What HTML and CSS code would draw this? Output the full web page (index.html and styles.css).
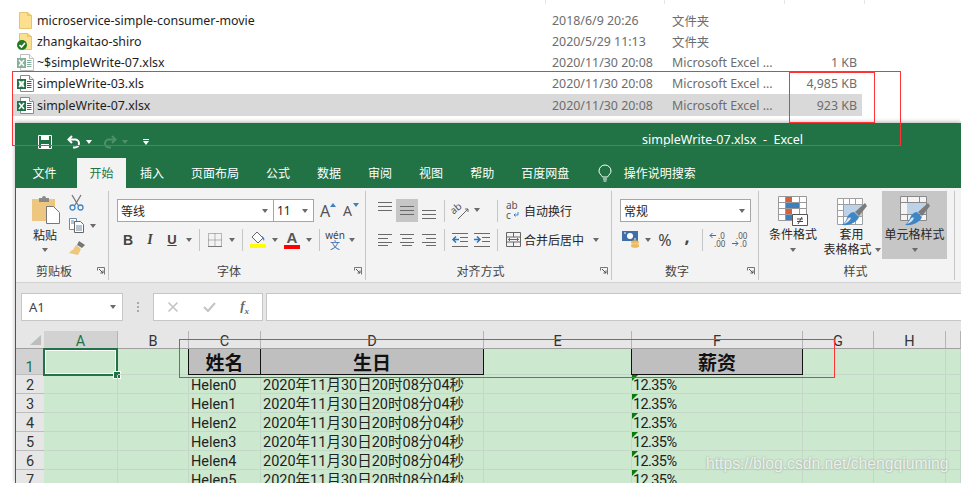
FILE: index.html
```html
<!DOCTYPE html>
<html lang="zh-CN">
    <head>
        <meta charset="UTF-8" />
        <title>simpleWrite-07.xlsx - Excel</title>
        <link rel="stylesheet" href="styles.css">
    </head>
    <body>
        <svg class="defs" width="0" height="0">
            <symbol id="folder" viewBox="0 0 13 17">
                <path d="M.5 .5h8l4 3v13H.5z" fill="#fde08f" stroke="#e6c36e"/>
                <path d="M8.5 .5v3h4" fill="#fbd26a" stroke="#e6c36e"/>
            </symbol>
            <symbol id="xl-doc" viewBox="0 0 17 17">
                <path d="M3.5 .5h9l4 4v12h-13z" fill="#fff" stroke="#8a8a8a"/>
                <path d="M12.5 .5v4h4" fill="#eee" stroke="#8a8a8a"/>
                <path d="M10 6.500h4.500M10 8.500h4.500M10 10.500h4.500M10 12.500h4.500" stroke="#217346"/>
                <rect x="0" y="4" width="9" height="10" fill="#217346"/>
                <path d="M2 6l5 6M7 6l-5 6" stroke="#fff" stroke-width="1.500"/>
            </symbol>
            <symbol id="launcher" viewBox="0 0 8 8">
                <path d="M.5 .5h7v7M.5 .5v3M.5 .5" fill="none" stroke="#777"/>
                <path d="M2 2l4 4M6 3.500V6H3.500" fill="none" stroke="#555"/>
            </symbol>
            <symbol id="lines-full" viewBox="0 0 14 10">
                <path d="M0 .5h14M0 4.500h14M0 8.500h14" stroke="#6a6a6a"/>
            </symbol>
            <symbol id="lines-left" viewBox="0 0 14 12">
                <path d="M0 .5h14M0 4.500h10M0 8.500h14M0 11.500h10" stroke="#6a6a6a"/>
            </symbol>
            <symbol id="lines-mid" viewBox="0 0 14 12">
                <path d="M0 .5h14M2 4.500h10M0 8.500h14M2 11.500h10" stroke="#6a6a6a"/>
            </symbol>
            <symbol id="lines-right" viewBox="0 0 14 12">
                <path d="M0 .5h14M4 4.500h10M0 8.500h14M4 11.500h10" stroke="#6a6a6a"/>
            </symbol>
            <symbol id="brush" viewBox="0 0 30 30">
                <path d="M28 7l2 3-8 10-4-4z" fill="#7b7b7b"/>
                <path d="M17 16l5 5c-2 5-9 9-17 8 3-2 4-5 5-7 1-3 4-6 7-6z" fill="#3f86c6"/>
                <path d="M7 28c3-1 6-3 7-6-2-1-3 0-4 2-1 1-2 3-3 4z" fill="#fff" opacity=".8"/>
            </symbol>
        </svg>

        <section class="file-list">
            <div class="file-head">
                <span></span><span></span><span></span><span></span>
            </div>
            <div class="file-row">
                <span class="file-name"><svg class="file-icon"><use href="#folder" x="2" y="0" width="13" height="17"/></svg>microservice-simple-consumer-movie</span>
                <span>2018/6/9 20:26</span>
                <span class="file-type">文件夹</span>
                <span></span>
            </div>
            <div class="file-row">
                <span class="file-name"><svg class="file-icon"><use href="#folder" x="2" y="0" width="13" height="17"/><circle cx="5" cy="12" r="5" fill="#217a21"/><path d="M2.500 12l2 2 3.500-4" fill="none" stroke="#fff" stroke-width="1.600"/></svg>zhangkaitao-shiro</span>
                <span>2020/5/29 11:13</span>
                <span class="file-type">文件夹</span>
                <span></span>
            </div>
            <div class="file-row">
                <span class="file-name"><svg class="file-icon faded"><use href="#xl-doc" width="17" height="17"/></svg>~$simpleWrite-07.xlsx</span>
                <span>2020/11/30 20:08</span>
                <span class="file-type">Microsoft Excel ...</span>
                <span class="file-size">1 KB</span>
            </div>
            <div class="file-row">
                <span class="file-name"><svg class="file-icon"><use href="#xl-doc" width="17" height="17"/><rect x="2" y="6" width="5" height="6" fill="#fff" opacity=".6"/></svg>simpleWrite-03.xls</span>
                <span>2020/11/30 20:08</span>
                <span class="file-type">Microsoft Excel ...</span>
                <span class="file-size">4,985 KB</span>
            </div>
            <div class="file-row selected">
                <span class="file-name"><svg class="file-icon"><use href="#xl-doc" width="17" height="17"/></svg>simpleWrite-07.xlsx</span>
                <span>2020/11/30 20:08</span>
                <span class="file-type">Microsoft Excel ...</span>
                <span class="file-size">923 KB</span>
            </div>
        </section>

        <main class="excel">
            <header class="titlebar">
                <div class="qat">
                    <svg class="qat-save" width="14" height="14" viewBox="0 0 14 14"><path d="M.5 .5h13v13H.5z" fill="none" stroke="#fff"/><path d="M3 1h8v4H3zM3 9h8v4H3z" fill="#fff"/><path d="M0 6h1v2H0z" fill="#fff"/></svg>
                    <svg class="qat-undo" width="14" height="14" viewBox="0 0 14 14"><path d="M5 1L1.500 4.500 5 8" fill="none" stroke="#fff" stroke-width="2"/><path d="M2 4.500h6a4 4 0 0 1 0 8H6" fill="none" stroke="#fff" stroke-width="2"/></svg>
                    <i class="caret white"></i>
                    <svg class="qat-redo" width="14" height="14" viewBox="0 0 14 14"><path d="M9 1l3.500 3.500L9 8" fill="none" stroke="#4f9069" stroke-width="2"/><path d="M12 4.500H6a4 4 0 0 0 0 8h2" fill="none" stroke="#4f9069" stroke-width="2"/></svg>
                    <i class="caret dim"></i>
                    <span class="qat-more"><i class="caret white"></i></span>
                </div>
                <div class="doc-title">simpleWrite-07.xlsx&nbsp; - &nbsp;Excel</div>
            </header>
            <nav class="tabs">
                <a class="tab first">文件</a>
                <a class="tab active">开始</a>
                <a class="tab">插入</a>
                <a class="tab">页面布局</a>
                <a class="tab">公式</a>
                <a class="tab">数据</a>
                <a class="tab">审阅</a>
                <a class="tab">视图</a>
                <a class="tab">帮助</a>
                <a class="tab">百度网盘</a>
                <a class="tab search">
                    <svg width="14" height="17" viewBox="0 0 14 17"><path d="M4.500 12C3 9.500 1 8.500 1 6a6 6 0 0 1 12 0c0 2.500-2 3.500-3.500 6z" fill="none" stroke="#fff"/><path d="M5 14h4M5.500 16h3" stroke="#fff"/></svg>
                    操作说明搜索
                </a>
            </nav>

            <section class="ribbon">
                <div class="group g-clip">
                    <div class="group-body clip-body">
                        <div class="big-btn paste">
                            <svg width="29" height="29" viewBox="0 0 29 29"><path d="M1 4h23v22H1z" fill="#edc67f"/><path d="M8 3h3a2 2 0 0 1 4 0h3v4H8z" fill="#8a8a8a"/><path d="M15.500 11.500h7l6 6v11h-13z" fill="#fff" stroke="#777"/></svg>
                            <span>粘贴</span>
                            <i class="caret"></i>
                        </div>
                        <div class="clip-tools">
                            <div class="clip-tool">
                                <svg width="15" height="16" viewBox="0 0 15 16"><path d="M3 0l6 10M12 0L6 10" stroke="#777" stroke-width="1.300"/><circle cx="3.500" cy="12.500" r="2.500" fill="none" stroke="#3f86c6" stroke-width="1.300"/><circle cx="11.500" cy="12.500" r="2.500" fill="none" stroke="#3f86c6" stroke-width="1.300"/></svg>
                            </div>
                            <div class="clip-tool">
                                <svg width="16" height="15" viewBox="0 0 16 15"><path d="M.5 .5h7v11h-7z" fill="#fff" stroke="#6f8aa5"/><path d="M5.500 3.500h6l3 3v8h-9z" fill="#fff" stroke="#666"/><path d="M2 3h3M2 5h3M7 8h6M7 10h6M7 12h6" stroke="#6f8aa5"/></svg>
                                <i class="caret"></i>
                            </div>
                            <div class="clip-tool">
                                <svg width="17" height="15" viewBox="0 0 17 15"><path d="M10 0l6 4-3 3-5-3z" fill="#777"/><path d="M7 4l5 4-3 6-9-2 3-3 1 0z" fill="#edc67f"/></svg>
                            </div>
                        </div>
                    </div>
                    <div class="group-label"><span>剪贴板</span><svg class="launch"><use href="#launcher" width="8" height="8"/></svg></div>
                </div>

                <div class="group g-font">
                    <div class="group-body rows">
                        <div class="tool-row">
                            <div class="combo font-combo"><span>等线</span><i class="caret"></i></div>
                            <div class="combo size-combo"><span>11</span><i class="caret"></i></div>
                            <span class="grow-btn up">A<i class="tri-up"></i></span>
                            <span class="grow-btn down">A<i class="tri-down"></i></span>
                        </div>
                        <div class="tool-row">
                            <span class="tool bold">B</span>
                            <span class="tool italic">I</span>
                            <span class="tool under">U</span>
                            <span class="caret-box"><i class="caret"></i></span>
                            <i class="sep"></i>
                            <span class="tool"><svg width="14" height="14" viewBox="0 0 14 14"><path d="M.5 .5h13v13H.5zM7 .5v13M.5 7h13" fill="none" stroke="#777" stroke-dasharray="1 1"/><path d="M0 13.500h14" stroke="#777"/></svg></span>
                            <span class="caret-box"><i class="caret"></i></span>
                            <i class="sep"></i>
                            <span class="tool"><svg width="16" height="16" viewBox="0 0 16 16"><path d="M7 0l6 6-5 5-6-6z" fill="#fff" stroke="#666"/><path d="M12 4c2 1 3 3 2 5-1-1-2-3-2-5z" fill="#3f86c6"/><rect y="12" width="16" height="4" fill="#ffff00"/></svg></span>
                            <span class="caret-box"><i class="caret"></i></span>
                            <span class="tool font-color">A</span>
                            <span class="caret-box"><i class="caret"></i></span>
                            <i class="sep"></i>
                            <span class="tool wen"><b>wén</b><em>文</em></span>
                            <span class="caret-box"><i class="caret"></i></span>
                        </div>
                    </div>
                    <div class="group-label"><span>字体</span><svg class="launch"><use href="#launcher" width="8" height="8"/></svg></div>
                </div>

                <div class="group g-align">
                    <div class="group-body rows">
                        <div class="tool-row">
                            <span class="tool"><svg class="v-top" width="14" height="10"><use href="#lines-full" width="14" height="10"/></svg></span>
                            <span class="tool on"><svg width="14" height="10"><use href="#lines-full" width="14" height="10"/></svg></span>
                            <span class="tool"><svg class="v-bot" width="14" height="10"><use href="#lines-full" width="14" height="10"/></svg></span>
                            <i class="sep"></i>
                            <div class="sec-b">
                                <span class="tool"><svg width="18" height="18" viewBox="0 0 18 18"><text x="0" y="10" transform="rotate(-40 5 8)" class="svg-text">ab</text><path d="M7 17L17 7M17 7h-3M17 7v3" fill="none" stroke="#666"/></svg></span>
                                <span class="caret-box"><i class="caret"></i></span>
                            </div>
                            <i class="sep"></i>
                            <span class="tool"><svg width="14" height="19" viewBox="0 0 14 19"><text x="0" y="8" class="svg-text">ab</text><text x="0" y="18" class="svg-text">c</text><path d="M12 11v3H8M9.500 12.500L8 14l1.500 1.500" fill="none" stroke="#3f86c6"/></svg></span>
                            <span class="tool-text">自动换行</span>
                        </div>
                        <div class="tool-row">
                            <span class="tool"><svg width="14" height="12"><use href="#lines-left" width="14" height="12"/></svg></span>
                            <span class="tool"><svg width="14" height="12"><use href="#lines-mid" width="14" height="12"/></svg></span>
                            <span class="tool"><svg width="14" height="12"><use href="#lines-right" width="14" height="12"/></svg></span>
                            <i class="sep"></i>
                            <div class="sec-b">
                                <span class="tool"><svg width="16" height="14" viewBox="0 0 16 14"><path d="M0 .5h16M8 4.500h8M8 8.500h8M0 13.500h16" stroke="#6a6a6a"/><path d="M7 6.500H1M4 3.500l-3 3 3 3" fill="none" stroke="#2f75b5" stroke-width="1.500"/></svg></span>
                                <span class="tool"><svg width="16" height="14" viewBox="0 0 16 14"><path d="M0 .5h16M8 4.500h8M8 8.500h8M0 13.500h16" stroke="#6a6a6a"/><path d="M0 6.500h6M3 3.500l3 3-3 3" fill="none" stroke="#2f75b5" stroke-width="1.500"/></svg></span>
                            </div>
                            <i class="sep"></i>
                            <span class="tool"><svg width="15" height="15" viewBox="0 0 15 15"><path d="M.5 .5h14v14H.5zM.5 5h14M.5 10h14M7.500 .5V5M7.500 10v4.500" fill="none" stroke="#666"/><path d="M2.500 7.500h10M4 6L2.500 7.500 4 9M11 6l1.500 1.500L11 9" fill="none" stroke="#2f75b5"/></svg></span>
                            <span class="tool-text">合并后居中</span>
                            <span class="caret-box merge-caret"><i class="caret"></i></span>
                        </div>
                    </div>
                    <div class="group-label"><span>对齐方式</span><svg class="launch"><use href="#launcher" width="8" height="8"/></svg></div>
                </div>

                <div class="group g-number">
                    <div class="group-body rows">
                        <div class="tool-row">
                            <div class="combo number-combo"><span>常规</span><i class="caret"></i></div>
                        </div>
                        <div class="tool-row">
                            <span class="tool"><svg width="18" height="17" viewBox="0 0 18 17"><path d="M0 0h16v10H0z" fill="#3f6fa8"/><circle cx="8" cy="5" r="3" fill="#fff"/><path d="M2 2h2M12 8h2" stroke="#fff"/><ellipse cx="13" cy="11" rx="4" ry="1.800" fill="#edb95e"/><ellipse cx="13" cy="13.500" rx="4" ry="1.800" fill="#f2c97f"/><ellipse cx="13" cy="15" rx="4" ry="1.800" fill="#edb95e"/></svg></span>
                            <span class="caret-box"><i class="caret"></i></span>
                            <span class="tool percent">%</span>
                            <span class="tool comma">,</span>
                            <i class="sep"></i>
                            <span class="tool"><svg width="16" height="17" viewBox="0 0 16 17"><path d="M6 4.500H0M2.500 2L0 4.500 2.500 7" fill="none" stroke="#2f75b5"/><text x="8" y="8" class="svg-num">.0</text><text x="4" y="16" class="svg-num">.00</text></svg></span>
                            <span class="tool"><svg width="16" height="17" viewBox="0 0 16 17"><text x="4" y="8" class="svg-num">.00</text><path d="M0 12.500h6M3.500 10L6 12.500 3.500 15" fill="none" stroke="#2f75b5"/><text x="8" y="16" class="svg-num">.0</text></svg></span>
                        </div>
                    </div>
                    <div class="group-label"><span>数字</span><svg class="launch"><use href="#launcher" width="8" height="8"/></svg></div>
                </div>

                <div class="group g-styles">
                    <div class="group-body styles-body">
                        <div class="style-btn cond">
                            <svg width="30" height="30" viewBox="0 0 30 30"><path d="M.5 .5h28v24H.5zM.5 6.500h28M.5 12.500h28M.5 18.500h28M7.500 .5v24M21.500 .5v24" fill="#fff" stroke="#999"/><path d="M8 1h6v5H8zM8 13h6v5H8z" fill="#d8603c"/><path d="M8 7h13v5H8zM8 19h6v5H8z" fill="#3f7fbf"/><path d="M14.500 18.500h15v11h-15z" fill="#fff" stroke="#555"/><path d="M19 23h6M19 25.500h6M24 21l-4 7" fill="none" stroke="#444"/></svg>
                            <span>条件格式</span>
                            <i class="caret"></i>
                        </div>
                        <div class="style-btn table">
                            <svg width="30" height="30" viewBox="0 0 30 30"><path d="M.5 2.500h25v26H.5zM.5 8.500h25M.5 14.500h25M.5 20.500h25M6.500 2.500v26M12.500 2.500v26M18.500 2.500v26" fill="#fff" stroke="#a0a0a0"/><path d="M7 9h18v11H7z" fill="#bcd2e8"/><use href="#brush" width="30" height="30"/></svg>
                            <span>套用</span>
                            <span class="with-caret">表格格式<i class="caret"></i></span>
                        </div>
                        <div class="style-btn cell-style">
                            <svg width="30" height="30" viewBox="0 0 30 30"><path d="M.5 .5h26v24H.5zM.5 6.500h26M.5 18.500h26M7.500 .5v6M7.500 18.500v6M19.500 .5v6M19.500 18.500v6" fill="#f4f4f4" stroke="#8a8a8a"/><path d="M7 7h19v11H7z" fill="#bcd2e8"/><use href="#brush" width="30" height="30"/></svg>
                            <span>单元格样式</span>
                            <i class="caret"></i>
                        </div>
                    </div>
                    <div class="group-label"><span>样式</span></div>
                </div>
            </section>

            <section class="formula-bar">
                <div class="name-box"><span>A1</span><i class="caret"></i></div>
                <div class="grip"><i></i><i></i><i></i></div>
                <div class="fx-box">
                    <svg width="12" height="12" viewBox="0 0 12 12"><path d="M1.500 1.500l9 9M10.500 1.500l-9 9" stroke="#c4c4c4" stroke-width="1.600"/></svg>
                    <svg width="13" height="12" viewBox="0 0 13 12"><path d="M1 6l4 4 7-8" fill="none" stroke="#c4c4c4" stroke-width="2"/></svg>
                    <span class="fx">f<sub>x</sub></span>
                </div>
                <div class="formula-input"></div>
            </section>

            <section class="sheet">
                <div class="corner"><i></i></div>
                <div class="col current">A</div>
                <div class="col">B</div>
                <div class="col">C</div>
                <div class="col">D</div>
                <div class="col">E</div>
                <div class="col">F</div>
                <div class="col">G</div>
                <div class="col">H</div>
                <div class="col"></div>

                <div class="row-num current tall">1</div>
                <div class="cell cell-active"><i class="fill-handle"></i></div>
                <div class="cell"></div>
                <div class="cell head-cell">姓名</div>
                <div class="cell head-cell">生日</div>
                <div class="cell"></div>
                <div class="cell head-cell">薪资</div>
                <div class="cell"></div>
                <div class="cell"></div>
                <div class="cell"></div>

                <div class="row-num">2</div><div class="cell"></div><div class="cell"></div><div class="cell">Helen0</div><div class="cell">2020年11月30日20时08分04秒</div><div class="cell"></div><div class="cell pct">12.35%</div><div class="cell"></div><div class="cell"></div><div class="cell"></div>
                <div class="row-num">3</div><div class="cell"></div><div class="cell"></div><div class="cell">Helen1</div><div class="cell">2020年11月30日20时08分04秒</div><div class="cell"></div><div class="cell pct">12.35%</div><div class="cell"></div><div class="cell"></div><div class="cell"></div>
                <div class="row-num">4</div><div class="cell"></div><div class="cell"></div><div class="cell">Helen2</div><div class="cell">2020年11月30日20时08分04秒</div><div class="cell"></div><div class="cell pct">12.35%</div><div class="cell"></div><div class="cell"></div><div class="cell"></div>
                <div class="row-num">5</div><div class="cell"></div><div class="cell"></div><div class="cell">Helen3</div><div class="cell">2020年11月30日20时08分04秒</div><div class="cell"></div><div class="cell pct">12.35%</div><div class="cell"></div><div class="cell"></div><div class="cell"></div>
                <div class="row-num">6</div><div class="cell"></div><div class="cell"></div><div class="cell">Helen4</div><div class="cell">2020年11月30日20时08分04秒</div><div class="cell"></div><div class="cell pct">12.35%</div><div class="cell"></div><div class="cell"></div><div class="cell"></div>
                <div class="row-num">7</div><div class="cell"></div><div class="cell"></div><div class="cell">Helen5</div><div class="cell">2020年11月30日20时08分04秒</div><div class="cell"></div><div class="cell pct">12.35%</div><div class="cell"></div><div class="cell"></div><div class="cell"></div>
            </section>
        </main>

        <div class="mark mark-files"></div>
        <div class="mark mark-size"></div>
        <div class="mark mark-head"></div>
        <div class="watermark">https://blog.csdn.net/chengqiuming</div>
    </body>
</html>
```

FILE: styles.css
```css
* {
    box-sizing: border-box;
    margin: 0;
    padding: 0;
}
html,
body {
    height: 483px;
    overflow: hidden;
    background: #fff;
}
body {
    position: relative;
    font-family: "Noto Sans", "Noto Sans CJK SC", sans-serif;
    font-size: 12px;
    color: #262626;
}
svg {
    overflow: visible;
}
.defs {
    position: absolute;
}

/* explorer list */
.file-list {
    height: 123px;
    padding-left: 13px;
}
.file-head {
    display: grid;
    grid-template-columns: 533px 119px 120px 80px;
    height: 10px;
}
.file-head span {
    height: 4px;
    border-right: 1px solid #e5e5e5;
}
.file-row {
    display: grid;
    grid-template-columns: 533px 119px 120px 77px;
    align-items: center;
    width: 849px;
    height: 21px;
    color: #6d6d6d;
    font-size: 12.400px;
}
.file-row > span {
    padding-left: 6px;
    white-space: nowrap;
}
.file-row .file-name {
    display: flex;
    align-items: center;
    gap: 3px;
    padding-left: 4px;
    color: #1e1e1e;
}
.file-row .file-type {
    padding-left: 7px;
}
.file-row .file-size {
    padding: 0 5px 0 0;
    text-align: right;
}
.file-row.selected {
    height: 22px;
    background: #d9d9d9;
}
.file-icon {
    width: 17px;
    height: 17px;
    flex: none;
}
.faded {
    opacity: 0.55;
}

/* excel window */
.excel {
    margin-left: 15px;
    height: 360px;
    border-left: 1px solid #217346;
    box-shadow: 0 -1px 4px rgba(0, 0, 0, 0.3);
}
.titlebar {
    position: relative;
    display: flex;
    align-items: center;
    height: 35px;
    padding-top: 2px;
    background: #217346;
    color: #fff;
}
.qat {
    display: flex;
    align-items: center;
    padding-left: 22px;
}
.qat-undo {
    margin-left: 15px;
}
.qat-redo {
    margin-left: 11px;
}
.qat .caret {
    margin-left: 5px;
}
.qat-more {
    display: flex;
    flex-direction: column;
    margin-left: 15px;
    border-top: 1px solid #fff;
    padding-top: 1px;
}
.qat-more .caret {
    margin-left: 0;
}
.doc-title {
    position: absolute;
    left: 626px;
    top: 8px;
    font-size: 12.500px;
    white-space: nowrap;
}
.tabs {
    display: flex;
    height: 30px;
    padding-left: 3px;
    background: #217346;
    color: #fff;
}
.tab {
    display: flex;
    align-items: center;
    padding: 0 13.500px;
    font-size: 12px;
    white-space: nowrap;
}
.tab.first {
    margin-right: 7px;
}
.tab.active {
    padding: 0 12.500px;
    margin-right: 0.500px;
    background: #f3f3f3;
    color: #217346;
}
.tab.search {
    gap: 12px;
    padding-left: 15px;
}

/* ribbon */
.ribbon {
    display: flex;
    height: 95px;
    padding: 3px 0 2px;
    background: #f3f3f3;
    border-bottom: 1px solid #d2d2d2;
    overflow: hidden;
}
.group {
    display: flex;
    flex-direction: column;
    flex: none;
    border-right: 1px solid #c6c6c6;
}
.g-clip {
    width: 93px;
}
.g-font {
    width: 257px;
}
.g-align {
    width: 246px;
}
.g-number {
    width: 147px;
}
.g-styles {
    width: 196px;
}
.group-body {
    flex: 1;
    min-height: 0;
}
.group-label {
    display: grid;
    grid-template-columns: 1fr auto 1fr;
    align-items: center;
    height: 18px;
    color: #444;
}
.group-label span {
    grid-column: 2;
    margin-right: 16px;
}
.g-styles .group-label span {
    margin-right: 2px;
}
.launch {
    grid-column: 3;
    justify-self: end;
    width: 8px;
    height: 8px;
    margin-right: 3px;
}
.caret {
    display: inline-block;
    width: 0;
    height: 0;
    border-left: 3.500px solid transparent;
    border-right: 3.500px solid transparent;
    border-top: 4px solid #6a6a6a;
}
.caret.white {
    border-top-color: #fff;
}
.caret.dim {
    border-top-color: #4f9069;
}
.caret-box {
    display: flex;
    align-items: center;
    justify-content: center;
    width: 12px;
    height: 22px;
    flex: none;
}
.sep {
    width: 1px;
    height: 22px;
    margin: 0 4px;
    flex: none;
    background: #c6c6c6;
}
.rows {
    display: flex;
    flex-direction: column;
    gap: 6px;
    padding-top: 8px;
    padding-left: 8px;
}
.tool-row {
    display: flex;
    align-items: center;
    height: 23px;
}
.tool {
    display: flex;
    align-items: center;
    justify-content: center;
    width: 22px;
    height: 23px;
    flex: none;
    color: #444;
}
.tool.on {
    background: #c6c6c6;
}
.tool-text {
    color: #262626;
    font-size: 12px;
    white-space: nowrap;
}
.v-top {
    margin-bottom: 8px;
}
.v-bot {
    margin-top: 8px;
}

/* clipboard */
.clip-body {
    display: flex;
}
.paste {
    width: 46px;
    margin-left: 6px;
}
.big-btn {
    display: flex;
    flex-direction: column;
    align-items: center;
    padding-top: 4px;
    color: #262626;
}
.big-btn span {
    line-height: 18px;
    margin-top: 3px;
}
.big-btn .caret {
    margin-top: 3px;
}
.clip-tool {
    display: flex;
    align-items: center;
    gap: 5px;
    height: 23px;
    padding-left: 1px;
}

/* font */
.combo {
    display: flex;
    align-items: center;
    justify-content: space-between;
    height: 23px;
    padding: 0 5px 0 3px;
    background: #fff;
    border: 1px solid #a6a6a6;
    font-size: 12px;
}
.font-combo {
    width: 157px;
}
.size-combo {
    width: 41px;
    margin-left: -1px;
}
.number-combo {
    width: 131px;
}
.grow-btn {
    position: relative;
    width: 22px;
    font-size: 16px;
    line-height: 20px;
    color: #555;
}
.grow-btn.up {
    margin-left: 6px;
}
.grow-btn.down {
    margin-left: 1px;
    font-size: 14px;
}
.tri-up,
.tri-down {
    position: absolute;
    top: 2px;
    left: 10px;
    border-left: 3px solid transparent;
    border-right: 3px solid transparent;
}
.tri-up {
    border-bottom: 4px solid #3f7fbf;
}
.tri-down {
    border-top: 4px solid #3f7fbf;
}
.bold {
    font: bold 14px "Liberation Sans", sans-serif;
}
.italic {
    font: italic bold 14px "Liberation Serif", serif;
}
.under {
    font: bold 13px "Liberation Sans", sans-serif;
    text-decoration: underline;
}
.font-color {
    height: 19px;
    font: bold 15px/16px "Liberation Sans", sans-serif;
    color: #555;
    border-bottom: 4px solid #ff0000;
    width: 16px;
    margin: 0 3px;
}
.wen {
    flex-direction: column;
    line-height: 10px;
}
.wen b {
    font-size: 10px;
    font-weight: 400;
}
.wen em {
    font-style: normal;
    font-size: 10px;
    color: #2f75b5;
}
.svg-text {
    font: 10px "Noto Sans", sans-serif;
    fill: #555;
}
.svg-num {
    font: 8px "Noto Sans", sans-serif;
    fill: #555;
}

/* alignment */
.sec-b {
    display: flex;
    width: 44px;
    flex: none;
}
.merge-caret {
    margin-left: 6px;
}
.percent {
    font-size: 16px;
}
.comma {
    font-size: 18px;
    font-weight: 700;
    padding-bottom: 8px;
}

/* styles */
.styles-body {
    display: flex;
    padding-left: 6px;
    height: 68px;
    flex: none;
    margin-bottom: 3px;
}
.style-btn {
    display: flex;
    flex-direction: column;
    align-items: center;
    padding-top: 5px;
    line-height: 15px;
    color: #262626;
    white-space: nowrap;
}
.style-btn svg {
    margin-bottom: 1px;
}
.style-btn .caret {
    margin-top: 6px;
}
.with-caret {
    display: flex;
    align-items: center;
    gap: 3px;
    padding-left: 1px;
}
.with-caret .caret {
    margin: 0;
}
.cond {
    width: 56px;
}
.table {
    width: 61px;
}
.cell-style {
    width: 65px;
    background: #c6c6c6;
}

/* formula bar */
.formula-bar {
    display: flex;
    height: 48px;
    padding: 10px 0 10px 5px;
    background: #e6e6e6;
}
.name-box,
.fx-box,
.formula-input {
    height: 28px;
    background: #fff;
    border: 1px solid #c6c6c6;
}
.name-box {
    display: flex;
    align-items: center;
    justify-content: space-between;
    width: 102px;
    padding: 0 6px 0 7px;
    font-size: 13px;
    color: #444;
}
.grip {
    display: flex;
    flex-direction: column;
    align-items: center;
    justify-content: center;
    gap: 2px;
    width: 30px;
}
.grip i {
    width: 2px;
    height: 2px;
    background: #a8a8a8;
}
.fx-box {
    display: flex;
    align-items: center;
    justify-content: space-between;
    width: 110px;
    padding: 0 13px 0 13px;
}
.fx {
    font: italic bold 13px "Liberation Serif", serif;
    color: #666;
}
.fx sub {
    font-size: 9px;
}
.formula-input {
    flex: 1;
    margin-left: 3px;
    border-right: 0;
}

/* sheet */
.sheet {
    display: grid;
    grid-template-columns: 28px 74px 71px 72px 223px 148px 171px 71px 72px 15px;
    grid-template-rows: 18px 26px repeat(6, 19px);
    background: #cce8cf;
    font-family: "Roboto", "Noto Sans CJK SC", sans-serif;
    font-size: 14.500px;
    color: #222;
}
.corner,
.col,
.row-num {
    background: #e6e6e6;
}
.corner {
    display: flex;
    align-items: flex-end;
    justify-content: flex-end;
    padding: 0 3px 3px 0;
    border-bottom: 1px solid #a0a0a0;
}
.corner i {
    width: 0;
    height: 0;
    border-left: 11px solid transparent;
    border-bottom: 10px solid #bdbdbd;
}
.col {
    text-align: center;
    line-height: 22px;
    height: 18px;
    overflow: hidden;
    border-right: 1px solid #b4b4b4;
    border-bottom: 1px solid #a0a0a0;
    color: #333;
}
.col.current {
    background: #d2d2d2;
    color: #217346;
}
.row-num {
    text-align: center;
    line-height: 21px;
    border-bottom: 1px solid #bdbdbd;
    color: #333;
}
.row-num.current {
    background: #d2d2d2;
    color: #217346;
    border-right: 1px solid #217346;
}
.row-num.tall {
    line-height: 38px;
}
.cell {
    position: relative;
    padding-left: 2px;
    line-height: 21px;
    white-space: nowrap;
    border-right: 1px solid #c4d8c7;
    border-bottom: 1px solid #c4d8c7;
}
.cell-active {
    margin: -1px 0 -1px -1px;
    border: 2px solid #217346;
    box-shadow: inset 0 0 0 1px #fff;
}
.fill-handle {
    position: absolute;
    right: -4px;
    bottom: -4px;
    width: 6px;
    height: 6px;
    background: #217346;
    outline: 1px solid #fff;
}
.head-cell {
    padding: 0;
    background: #bfbfbf;
    border-left: 1px solid #111;
    border-right: 1px solid #111;
    border-bottom: 1px solid #111;
    margin-left: -1px;
    text-align: center;
    font-family: "Noto Sans CJK SC", sans-serif;
    font-size: 19px;
    font-weight: 700;
    line-height: 25px;
    color: #111;
}
.pct {
    padding-left: 1px;
    letter-spacing: -0.600px;
}
.pct::before {
    content: "";
    position: absolute;
    top: 0;
    left: 0;
    border-top: 6px solid #0b7a0b;
    border-right: 6px solid transparent;
}

/* annotations drawn over the screenshot */
.mark {
    position: absolute;
    border: 1px solid #f33;
}
.mark-files {
    left: 12px;
    top: 71px;
    width: 889px;
    height: 75px;
}
.mark-size {
    left: 789px;
    top: 72px;
    width: 86px;
    height: 51px;
}
.mark-head {
    left: 179px;
    top: 339px;
    width: 656px;
    height: 39px;
}
.watermark {
    position: absolute;
    left: 706px;
    top: 455px;
    font: 15.700px "Liberation Sans", sans-serif;
    color: rgba(255, 255, 255, 0.8);
    text-shadow: 0 0 2px rgba(120, 120, 120, 0.7);
    white-space: nowrap;
}
```
